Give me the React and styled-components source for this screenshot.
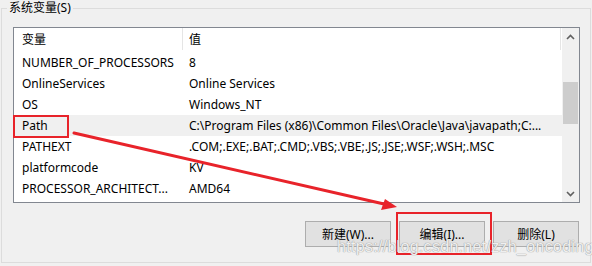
import React from "react";
import styled, { createGlobalStyle } from "styled-components";

const GlobalStyle = createGlobalStyle`
  html, body {
    margin: 0;
    padding: 0;
    background: #f0f0f0;
  }
`;

const UI_FONT = `"Noto Sans", "Noto Sans CJK SC", sans-serif`;

const Page = styled.div`
  position: relative;
  width: 592px;
  height: 266px;
  overflow: hidden;
  box-sizing: border-box;
  padding-left: 1px;
  background: #f0f0f0;
  font-family: ${UI_FONT};
  font-size: 12px;
  color: #000;
`;

const Group = styled.fieldset`
  margin: 0;
  padding: 0;
  width: 590px;
  height: 263px;
  box-sizing: border-box;
  border: 1px solid #dcdcdc;
  min-width: 0;
`;

const GroupTitle = styled.legend`
  margin-left: 5px;
  padding: 0 2px;
  line-height: 16px;
  font-size: 12px;
`;

const GroupBody = styled.div`
  display: flex;
  flex-direction: column;
  align-items: flex-end;
  padding: 11px 10px 0 11px;
`;

const ListBox = styled.div`
  display: flex;
  width: 567px;
  height: 176px;
  box-sizing: border-box;
  border: 1px solid #828790;
  background: #fff;
  overflow: hidden;
`;

const Table = styled.div`
  flex: 1;
  display: flex;
  flex-direction: column;
  min-width: 0;
`;

const HeaderRow = styled.div`
  display: grid;
  grid-template-columns: 168px 1px 377px 1px;
  height: 24px;
  align-items: center;
`;

const HeaderCell = styled.div`
  padding-left: ${({ $first }) => ($first ? "8px" : "6px")};
  line-height: 24px;
`;

const Divider = styled.div`
  align-self: stretch;
  margin-bottom: 2px;
  background: #e5e5e5;
`;

const Row = styled.div`
  display: grid;
  grid-template-columns: 169px 1fr;
  height: 21px;
  align-items: center;
  background: ${({ $selected }) => ($selected ? "#f0f0f0" : "transparent")};
`;

const Cell = styled.div`
  padding-left: ${({ $first }) => ($first ? "8px" : "6px")};
  white-space: nowrap;
  overflow: hidden;
  line-height: 21px;
`;

const ScrollBar = styled.div`
  width: 17px;
  display: flex;
  flex-direction: column;
  align-items: center;
  background: #f0f0f0;
`;

const ScrollArrow = styled.div`
  height: 17px;
  width: 17px;
  display: flex;
  align-items: center;
  justify-content: center;
`;

const ScrollTrack = styled.div`
  flex: 1;
  width: 15px;
  padding-top: ${({ $offset }) => $offset}px;
`;

const Thumb = styled.div`
  height: ${({ $size }) => $size}px;
  background: #cdcdcd;
`;

const ButtonRow = styled.div`
  display: flex;
  gap: 8px;
  margin-top: 18px;
  margin-right: 1px;
`;

const Button = styled.button`
  width: 86px;
  height: 26px;
  box-sizing: border-box;
  border: 1px solid #adadad;
  background: #e1e1e1;
  font-family: ${UI_FONT};
  font-size: 12px;
  color: #000;
  padding: 0;
`;

const Mark = styled.div`
  position: absolute;
  border: 2px solid #e8232a;
  box-sizing: border-box;
  pointer-events: none;
`;

const Watermark = styled.div`
  position: absolute;
  left: 337px;
  top: 238px;
  font-family: "Liberation Sans", sans-serif;
  font-size: 16px;
  letter-spacing: 0.3px;
  color: rgba(255, 255, 255, 0.85);
  text-shadow: 0 0 1px #9a9a9a, 0 0 1px #9a9a9a;
  white-space: nowrap;
  pointer-events: none;
`;

const Overlay = styled.svg`
  position: absolute;
  left: 0;
  top: 0;
  pointer-events: none;
`;

const rows = [
  ["NUMBER_OF_PROCESSORS", "8"],
  ["OnlineServices", "Online Services"],
  ["OS", "Windows_NT"],
  ["Path", "C:\\Program Files (x86)\\Common Files\\Oracle\\Java\\javapath;C:..."],
  ["PATHEXT", ".COM;.EXE;.BAT;.CMD;.VBS;.VBE;.JS;.JSE;.WSF;.WSH;.MSC"],
  ["platformcode", "KV"],
  ["PROCESSOR_ARCHITECT...", "AMD64"],
];

function Chevron({ up }) {
  return (
    <svg width="9" height="6" viewBox="0 0 9 6">
      <path
        d={up ? "M1 5 L4.5 1.5 L8 5" : "M1 1 L4.5 4.5 L8 1"}
        fill="none"
        stroke="#606060"
        strokeWidth="1.6"
      />
    </svg>
  );
}

export default function App() {
  return (
    <Page>
      <GlobalStyle />
      <Group>
        <GroupTitle>系统变量(S)</GroupTitle>
        <GroupBody>
          <ListBox>
            <Table>
              <HeaderRow>
                <HeaderCell $first>变量</HeaderCell>
                <Divider />
                <HeaderCell>值</HeaderCell>
                <Divider />
              </HeaderRow>
              {rows.map(([name, value]) => (
                <Row key={name} $selected={name === "Path"}>
                  <Cell $first>{name}</Cell>
                  <Cell>{value}</Cell>
                </Row>
              ))}
            </Table>
            <ScrollBar>
              <ScrollArrow>
                <Chevron up />
              </ScrollArrow>
              <ScrollTrack $offset={37}>
                <Thumb $size={42} />
              </ScrollTrack>
              <ScrollArrow>
                <Chevron />
              </ScrollArrow>
            </ScrollBar>
          </ListBox>
          <ButtonRow>
            <Button>新建(W)...</Button>
            <Button>编辑(I)...</Button>
            <Button>删除(L)</Button>
          </ButtonRow>
        </GroupBody>
      </Group>

      <Mark style={{ left: 13, top: 115, width: 56, height: 23 }} />
      <Mark style={{ left: 396, top: 212, width: 96, height: 43 }} />
      <Watermark>https://blog.csdn.net/zzh_oncoding</Watermark>
      <Overlay width="592" height="266">
        <line x1="74" y1="133" x2="384" y2="204" stroke="#e8232a" strokeWidth="3" strokeLinecap="round" />
        <polygon points="397,207 381,210 385,199" fill="#e8232a" />
      </Overlay>
    </Page>
  );
}
